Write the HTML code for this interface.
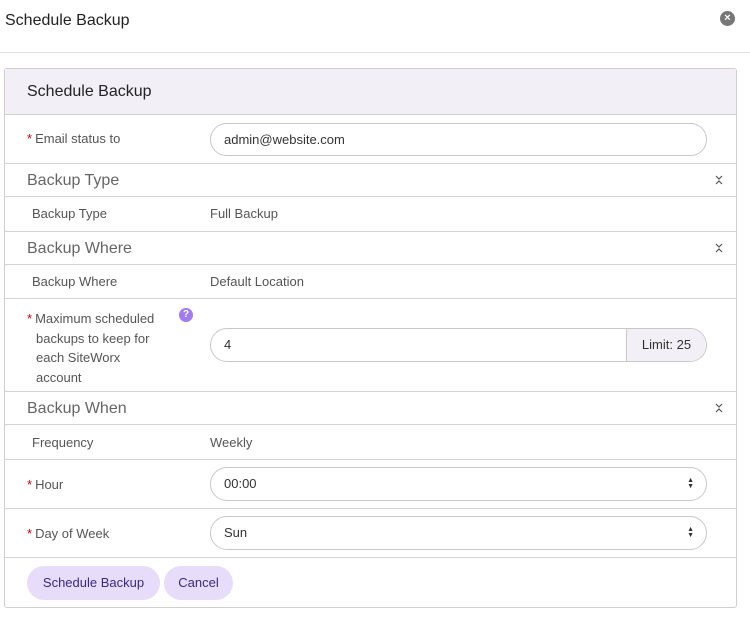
<!DOCTYPE html>
<html><head><style>
*{box-sizing:border-box;margin:0;padding:0}
body{width:750px;height:619px;background:#fff;font-family:"Liberation Sans",sans-serif;position:relative;overflow:hidden;color:#555}
.a{position:absolute}
.title{left:5px;top:12px;font-size:16px;color:#222}
.close{left:720px;top:11px;width:15px;height:15px;border-radius:50%;background:#777;color:#fff;font-size:11px;line-height:15px;text-align:center;font-weight:bold}
.hl{left:0;top:52px;width:750px;height:1px;background:#e3e3e3}
.panel{left:4px;top:68px;width:733px;height:540px;border:1px solid #cfcfcf;border-radius:3px}
.ph{left:5px;top:69px;width:731px;height:45px;background:#f3eff6}
.line{left:5px;width:731px;height:1px;background:#d3d3d3}
.t{font-size:13px;color:#555}
.sec{font-size:16px;color:#666}
.req{color:#c00;margin-right:3px}
.inp{left:210px;width:497px;border:1px solid #c8c8c8;border-radius:17px;font-size:13px;color:#333;padding-left:13px;background:#fff}
.chev{left:714px}
.btn{top:566px;height:34px;border-radius:17px;background:#e8dcfb;color:#3b2a7a;font-size:13px;line-height:34px;text-align:center}
.arr{position:absolute;right:12px;top:50%;transform:translateY(-50%);font-size:7px;line-height:6px;color:#333}
</style></head><body>
<div class="a title">Schedule Backup</div>
<div class="a close">×</div>
<div class="a hl"></div>
<div class="a panel"></div>
<div class="a ph"></div>
<div class="a" style="left:27px;top:83px;font-size:16px;color:#222">Schedule Backup</div>
<div class="a line" style="top:114px"></div>
<div class="a t" style="left:27px;top:131px"><span class="req">*</span>Email status to</div>
<div class="a inp" style="top:123px;height:33px;line-height:31px">admin@website.com</div>
<div class="a line" style="top:163px"></div>
<div class="a sec" style="left:27px;top:172px">Backup Type</div>
<svg class="a chev" style="top:174px" width="10" height="12"><path d="M2 2l3 3 3-3M2 10l3-3 3 3" stroke="#555" fill="none" stroke-width="1.2"/></svg>
<div class="a line" style="top:196px"></div>
<div class="a t" style="left:32px;top:206px">Backup Type</div>
<div class="a t" style="left:210px;top:206px">Full Backup</div>
<div class="a line" style="top:231px"></div>
<div class="a sec" style="left:27px;top:240px">Backup Where</div>
<svg class="a chev" style="top:242px" width="10" height="12"><path d="M2 2l3 3 3-3M2 10l3-3 3 3" stroke="#555" fill="none" stroke-width="1.2"/></svg>
<div class="a line" style="top:264px"></div>
<div class="a t" style="left:32px;top:274px">Backup Where</div>
<div class="a t" style="left:210px;top:274px">Default Location</div>
<div class="a line" style="top:298px"></div>
<div class="a t" style="left:27px;top:309px;line-height:19.5px"><span class="req">*</span>Maximum scheduled</div>
<div class="a t" style="left:36px;top:328.5px;line-height:19.5px">backups to keep for<br>each SiteWorx<br>account</div>
<div class="a" style="left:179px;top:308px;width:14px;height:14px;border-radius:50%;background:#a07cf0;color:#fff;font-size:10px;line-height:14px;text-align:center;font-weight:bold">?</div>
<div class="a inp" style="top:328px;height:34px;line-height:32px;overflow:hidden">4<div style="position:absolute;right:0;top:0;width:80px;height:32px;background:#f3eff6;border-left:1px solid #c8c8c8;text-align:center">Limit: 25</div></div>
<div class="a line" style="top:391px"></div>
<div class="a sec" style="left:27px;top:400px">Backup When</div>
<svg class="a chev" style="top:402px" width="10" height="12"><path d="M2 2l3 3 3-3M2 10l3-3 3 3" stroke="#555" fill="none" stroke-width="1.2"/></svg>
<div class="a line" style="top:424px"></div>
<div class="a t" style="left:32px;top:435px">Frequency</div>
<div class="a t" style="left:210px;top:435px">Weekly</div>
<div class="a line" style="top:459px"></div>
<div class="a t" style="left:27px;top:477px"><span class="req">*</span>Hour</div>
<div class="a inp" style="top:467px;height:34px;line-height:32px">00:00<span class="arr">▲<br>▼</span></div>
<div class="a line" style="top:508px"></div>
<div class="a t" style="left:27px;top:526px"><span class="req">*</span>Day of Week</div>
<div class="a inp" style="top:516px;height:34px;line-height:32px">Sun<span class="arr">▲<br>▼</span></div>
<div class="a line" style="top:557px"></div>
<div class="a btn" style="left:27px;width:133px">Schedule Backup</div>
<div class="a btn" style="left:164px;width:69px">Cancel</div>
</body></html>
